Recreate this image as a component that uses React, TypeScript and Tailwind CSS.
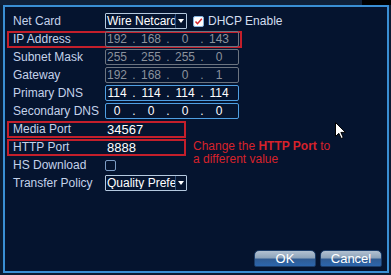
import type { ReactNode } from 'react';

const font = "font-['Liberation_Sans',Arial,sans-serif]";

function Row({ label, children, box }: { label: string; children?: ReactNode; box?: string }) {
  return (
    <div className="flex h-[18px] items-center">
      <div className={`ml-[2px] flex h-[17px] items-center pl-[6px] ${box ?? ''}`}>
        <span className="w-[92px] whitespace-nowrap text-[12px] leading-none text-[#c4d2ea]">{label}</span>
        {children}
      </div>
    </div>
  );
}

function IpField({ parts, active }: { parts: string[]; active?: boolean }) {
  const tone = active ? 'border-[#4f9fe2] text-white' : 'border-[#6c7480] text-[#8b929c]';
  return (
    <div className={`flex h-[16px] w-[134px] shrink-0 items-center rounded-[2px] border text-[12px] leading-none ${tone}`}>
      {parts.map((p, i) => (
        <div key={i} className="flex">
          {i > 0 && <span className="w-[12px] text-center">.</span>}
          <span className="w-[22px] text-center">{p}</span>
        </div>
      ))}
    </div>
  );
}

function Select({ value }: { value: string }) {
  return (
    <div className="flex h-[16px] w-[82px] shrink-0 items-center rounded-[1px] border border-[#b5c9df] text-[12px] leading-none text-white">
      <span className="flex-1 overflow-hidden whitespace-nowrap pl-[1px]">{value}</span>
      <span className="flex h-full w-[11px] items-center justify-center border-l border-[#2f4f78]">
        <svg width="6" height="4" viewBox="0 0 6 4">
          <path d="M0 0h6L3 4z" fill="#ffffff" />
        </svg>
      </span>
    </div>
  );
}

function Button({ children }: { children: ReactNode }) {
  return (
    <div className="flex h-[17px] w-[62px] items-center justify-center rounded-t-[5px] rounded-b-[2px] border border-[#1b3c68] bg-[linear-gradient(to_bottom,#b2c1d1_0%,#8ea4bb_45%,#2f5b93_55%,#2c66ad_100%)] text-[13px] leading-none text-white">
      {children}
    </div>
  );
}

export default function App() {
  return (
    <div className={`relative h-[275px] w-[391px] overflow-hidden bg-[#0b1c33] ${font}`}>
      <div className="flex h-[5px]">
        <div className="w-[362px] bg-[#0f213a]" />
        <div className="flex-1 bg-black" />
      </div>
      <div className="ml-[3px] mr-[2px] flex h-[268px] flex-col border-2 border-[#3a8fd4] bg-[#05142f] pt-[5px]">
        <Row label="Net Card">
          <Select value="Wire Netcard" />
          <span className="ml-[6px] flex h-[11px] w-[11px] items-center justify-center rounded-[2px] border border-[#86b4e0] bg-white">
            <svg width="9" height="9" viewBox="0 0 9 9">
              <path d="M1.5 4.5l2 2.2L7.8 1.8" fill="none" stroke="#d2232a" strokeWidth="1.5" />
            </svg>
          </span>
          <span className="ml-[4px] whitespace-nowrap text-[12px] leading-none text-[#d3deef]">DHCP Enable</span>
        </Row>
        <Row label="IP Address" box="w-[235px] shadow-[inset_0_0_0_2px_#c41f2b]">
          <IpField parts={['192', '168', '0', '143']} />
        </Row>
        <Row label="Subnet Mask">
          <IpField parts={['255', '255', '255', '0']} />
        </Row>
        <Row label="Gateway">
          <IpField parts={['192', '168', '0', '1']} />
        </Row>
        <Row label="Primary DNS">
          <IpField parts={['114', '114', '114', '114']} active />
        </Row>
        <Row label="Secondary DNS">
          <IpField parts={['0', '0', '0', '0']} active />
        </Row>
        <Row label="Media Port" box="w-[179px] shadow-[inset_0_0_0_2px_#c41f2b]">
          <span className="pl-[2px] text-[13px] leading-none text-white">34567</span>
        </Row>
        <Row label="HTTP Port" box="w-[179px] shadow-[inset_0_0_0_2px_#c41f2b]">
          <span className="pl-[2px] text-[13px] leading-none text-white">8888</span>
        </Row>
        <Row label="HS Download">
          <span className="h-[11px] w-[11px] rounded-[2px] border border-[#7d9cc4]" />
        </Row>
        <Row label="Transfer Policy">
          <Select value="Quality Preferred" />
        </Row>
        <div className="mt-auto flex justify-end gap-[4px] pb-[4px] pr-[5px]">
          <Button>OK</Button>
          <Button>Cancel</Button>
        </div>
      </div>

      <div className="absolute left-[193px] top-[140px] text-[12px] leading-[13px] text-[#d7222b]">
        <div>
          Change the <span className="font-bold">HTTP Port</span> to
        </div>
        <div>a different value</div>
      </div>

      <svg className="absolute left-[335px] top-[122px]" width="11" height="17" viewBox="0 0 11 17">
        <path d="M0.5 0.5v14l3.3-3.2 2.4 5.2 2.1-1-2.4-5.1h4.6z" fill="#ffffff" stroke="#000000" strokeWidth="1" />
      </svg>
    </div>
  );
}
